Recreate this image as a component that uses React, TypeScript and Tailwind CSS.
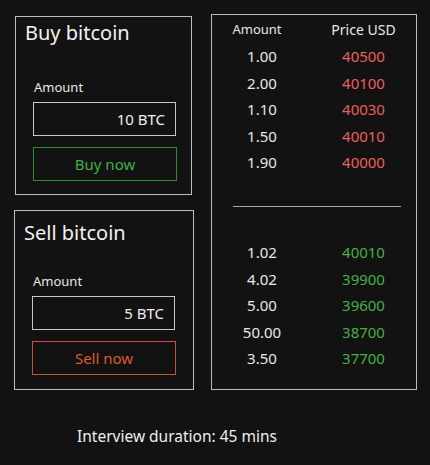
import React from "react";

const font = { fontFamily: '"Noto Sans", "DejaVu Sans", sans-serif' };

const asks = ["40500", "40100", "40030", "40010", "40000"];
const askAmt = ["1.00", "2.00", "1.10", "1.50", "1.90"];
const bids = ["40010", "39900", "39600", "38700", "37700"];
const bidAmt = ["1.02", "4.02", "5.00", "50.00", "3.50"];

function Row({ a, p, color }: { a: string; p: string; color: string }) {
  return (
    <div className="flex h-[26.5px] items-center">
      <div className="w-[100px] shrink-0 text-center text-[15px] text-[#e8e8e8]">{a}</div>
      <div className={`w-[103px] shrink-0 text-center text-[15px] ${color}`}>{p}</div>
    </div>
  );
}

function TradeBox({
  title,
  value,
  btn,
  btnClass,
  extra,
  gap,
}: {
  title: string;
  value: string;
  btn: string;
  btnClass: string;
  extra: string;
  gap: string;
}) {
  return (
    <div className={`border-[1.5px] border-[#bdbdbd] ${extra}`}>
      <div className="pl-[9px] text-[20px] leading-[28px] text-[#f2f2f2]">{title}</div>
      <div className={`pl-[18px] text-[13px] leading-[20px] text-[#e8e8e8] ${gap}`}>Amount</div>
      <div className="ml-[17px] mt-[5px] flex h-[34px] w-[143px] items-center justify-end border-[1.5px] border-[#c8c8c8] pr-[10px] text-[15px] text-[#eeeeee]">
        {value}
      </div>
      <div
        className={`ml-[17px] mt-[11px] flex h-[34px] w-[144px] items-center justify-center border-[1.5px] text-[15px] ${btnClass}`}
      >
        {btn}
      </div>
    </div>
  );
}

export default function App() {
  return (
    <div className="relative h-[465px] w-[430px] bg-[#121212] pl-[14px] pt-[14px]" style={font}>
      <div className="flex items-start">
        <div className="flex w-[181px] flex-col">
          <TradeBox
            title="Buy bitcoin"
            value="10 BTC"
            btn="Buy now"
            btnClass="border-[#2f8a33] text-[#45ad45]"
            extra="ml-[1px] mt-[2px] h-[179px] w-[177px] pt-[2px]"
            gap="mt-[30px]"
          />
          <TradeBox
            title="Sell bitcoin"
            value="5 BTC"
            btn="Sell now"
            btnClass="border-[#c9522e] text-[#de5a30]"
            extra="mt-[15px] h-[180px] w-[180px] pt-[8px]"
            gap="mt-[24px]"
          />
        </div>
        <div className="ml-[16px] h-[376px] w-[206px] border-[1.5px] border-[#bdbdbd] pt-[1px]">
          <div className="flex h-[27px] items-center">
            <div className="w-[100px] shrink-0 pr-[10px] text-center text-[13px] text-[#e8e8e8]">Amount</div>
            <div className="w-[103px] shrink-0 text-center text-[14px] text-[#e8e8e8]">Price USD</div>
          </div>
          {asks.map((p, i) => (
            <Row key={p + i} a={askAmt[i]} p={p} color="text-[#ec5f5f]" />
          ))}
          <div className="ml-[21px] mt-[30px] h-[1.5px] w-[168px] bg-[#a8a8a8]" />
          <div className="mt-[32px]">
            {bids.map((p, i) => (
              <Row key={p + i} a={bidAmt[i]} p={p} color="text-[#45b045]" />
            ))}
          </div>
        </div>
      </div>
      <div className="mt-[36px] pl-[63px] text-[15.5px] leading-[20px] text-[#eeeeee]">
        Interview duration: 45 mins
      </div>
    </div>
  );
}
